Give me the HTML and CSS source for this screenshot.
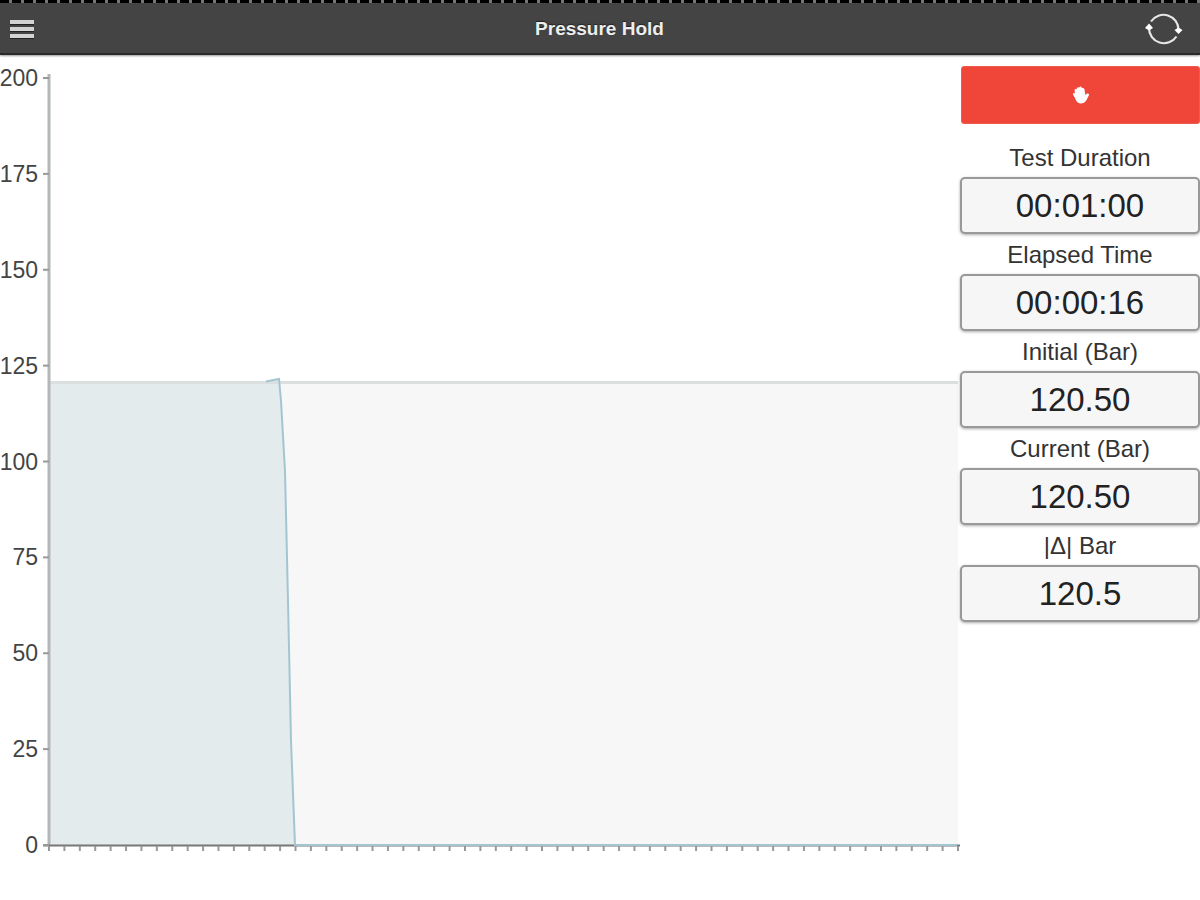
FILE: index.html
```html
<!DOCTYPE html>
<html lang="en">
<head>
    <meta charset="UTF-8">
    <meta name="viewport" content="width=device-width, initial-scale=1.0">
    <title>Pressure Hold</title>
    <link rel="stylesheet" href="styles.css">
</head>
<body>
    <header class="header">
        <button type="button" class="icon-btn" aria-label="Menu">
            <svg width="24" height="20" viewBox="0 0 24 20">
                <path d="M0 3h24M0 10h24M0 17h24" stroke="#222" stroke-width="4" transform="translate(0 1)"/>
                <path d="M0 3h24M0 10h24M0 17h24" stroke="#d2d2d2" stroke-width="4"/>
            </svg>
        </button>
        <h1 class="title">Pressure Hold</h1>
        <button type="button" class="icon-btn icon-right" aria-label="Refresh">
            <svg width="38" height="34" viewBox="0 0 38 34">
                <g fill="none" stroke="#e6e6e6" stroke-width="2.2">
                    <path d="M6 9.500A15 15 0 0 1 33.500 18"/>
                    <path d="M31.500 24.500A15 15 0 0 1 4 16"/>
                </g>
                <path d="M4 11.500l4 4.500l-4 2.500l-4-2.500zM33.500 22l-4-4l4-2.500l4 2.500z" fill="#fff"/>
            </svg>
        </button>
    </header>

    <main class="content">
        <svg id="chart" class="chart" viewBox="0 0 960 805" role="img" aria-label="Pressure in bar">
            <rect x="49" y="328" width="909" height="462" fill="#f7f7f7"/>
            <path d="M49 327.500H269L279 324L281 346L285 416L288 546L291 686L295 790H49z" fill="#e4ebed"/>
            <path d="M49 327.500H958" stroke="#dcdfdf" stroke-width="3"/>
            <path d="M49 19V790" stroke="#b3b7b8" stroke-width="3"/>
            <path d="M43 790.500H960" stroke="#777" stroke-width="2"/>
            <g id="ticks" stroke="#999" stroke-width="2"></g>
            <path d="M266 326.500L279 324L281 346L285 416L288 546L291 686L295 790H957" fill="none" stroke="#a3c5d2" stroke-width="2"/>
            <g id="labels" class="axis-labels"></g>
        </svg>

        <form class="side">
            <button type="button" class="stop-btn" aria-label="Stop">
                <svg width="18" height="18" viewBox="0 0 18 18">
                    <path d="M3 12L1 8.500Q.5 7 2 7L3 7.500L2.500 4Q3 2.500 4.500 3.300L5 2Q6 .6 7 1.800L7.500 1Q9 0 9.500 1.500L10.500 2Q12 1.500 12.500 3.500L13.300 9L15 7.500Q17.500 7 17 9L14.500 14Q12.500 17.500 8.500 17.500Q4.500 17 3 12z" fill="#fff"/>
                </svg>
            </button>
            <label for="duration">Test Duration</label>
            <input type="text" id="duration" value="00:01:00" readonly>
            <label for="elapsed">Elapsed Time</label>
            <input type="text" id="elapsed" value="00:00:16" readonly>
            <label for="initial">Initial (Bar)</label>
            <input type="text" id="initial" value="120.50" readonly>
            <label for="current">Current (Bar)</label>
            <input type="text" id="current" value="120.50" readonly>
            <label for="delta">|Δ| Bar</label>
            <input type="text" id="delta" value="120.5" readonly>
        </form>
    </main>

    <script src="script.js"></script>
</body>
</html>
```

FILE: styles.css
```css
* {
    box-sizing: border-box;
}
body {
    margin: 0;
    background: #fff;
    color: #333;
    font-family: "Liberation Sans", Arial, sans-serif;
}
.header {
    display: grid;
    grid-template-columns: 1fr auto 1fr;
    align-items: center;
    height: 55px;
    padding: 0 17px 0 10px;
    background: repeating-linear-gradient(90deg, #000 0 9px, #777 9px 12px) top / 100% 3px no-repeat #444;
    border-bottom: 2px solid #292929;
    box-shadow: 0 1px 2px #999;
}
.title {
    margin: 0;
    padding-left: 6px;
    padding-top: 4px;
    font-size: 19px;
    line-height: 24px;
    color: #eee;
    text-shadow: 0 -1px 1px #222;
}
.icon-btn {
    display: flex;
    justify-self: start;
    padding: 4px 0 0;
    border: 0;
    background: none;
}
.icon-right {
    justify-self: end;
}
.content {
    display: grid;
    grid-template-columns: 4fr 1fr;
    align-items: start;
}
.chart {
    display: block;
    width: 100%;
}
.axis-labels {
    font-size: 23px;
    text-anchor: end;
    fill: #444;
}
.side {
    display: flex;
    flex-direction: column;
    padding-top: 11px;
}
.stop-btn {
    display: flex;
    align-items: center;
    justify-content: center;
    height: 58px;
    margin-bottom: 13px;
    margin-left: 1px;
    border: 1px solid #f0594c;
    border-radius: 3px;
    background: #f0463a;
}
label {
    padding-top: 2px;
    font-size: 24px;
    line-height: 38px;
    text-align: center;
}
input {
    width: 100%;
    height: 57px;
    padding: 0;
    border: 2px solid #999;
    border-radius: 5px;
    background: #f6f6f6;
    box-shadow: 0 1px 3px #aaa;
    color: #222;
    font-family: inherit;
    font-size: 33px;
    text-align: center;
}
```

FILE: script.js
```js
const ns = 'http://www.w3.org/2000/svg';
const ticks = document.getElementById('ticks');
const labels = document.getElementById('labels');

function addTick(d) {
    const path = document.createElementNS(ns, 'path');
    path.setAttribute('d', d);
    ticks.appendChild(path);
}

// y axis, 0 to 200 bar
for (let bar = 0; bar <= 200; bar += 25) {
    const y = 790 - bar * 767 / 200;
    addTick(`M43 ${y}H49`);
    const text = document.createElementNS(ns, 'text');
    text.setAttribute('x', 38);
    text.setAttribute('y', y + 8);
    text.textContent = bar;
    labels.appendChild(text);
}

// x axis, one tick per second
for (let s = 0; s < 60; s++) {
    addTick(`M${49 + s * 909 / 59} 791V796`);
}
```
